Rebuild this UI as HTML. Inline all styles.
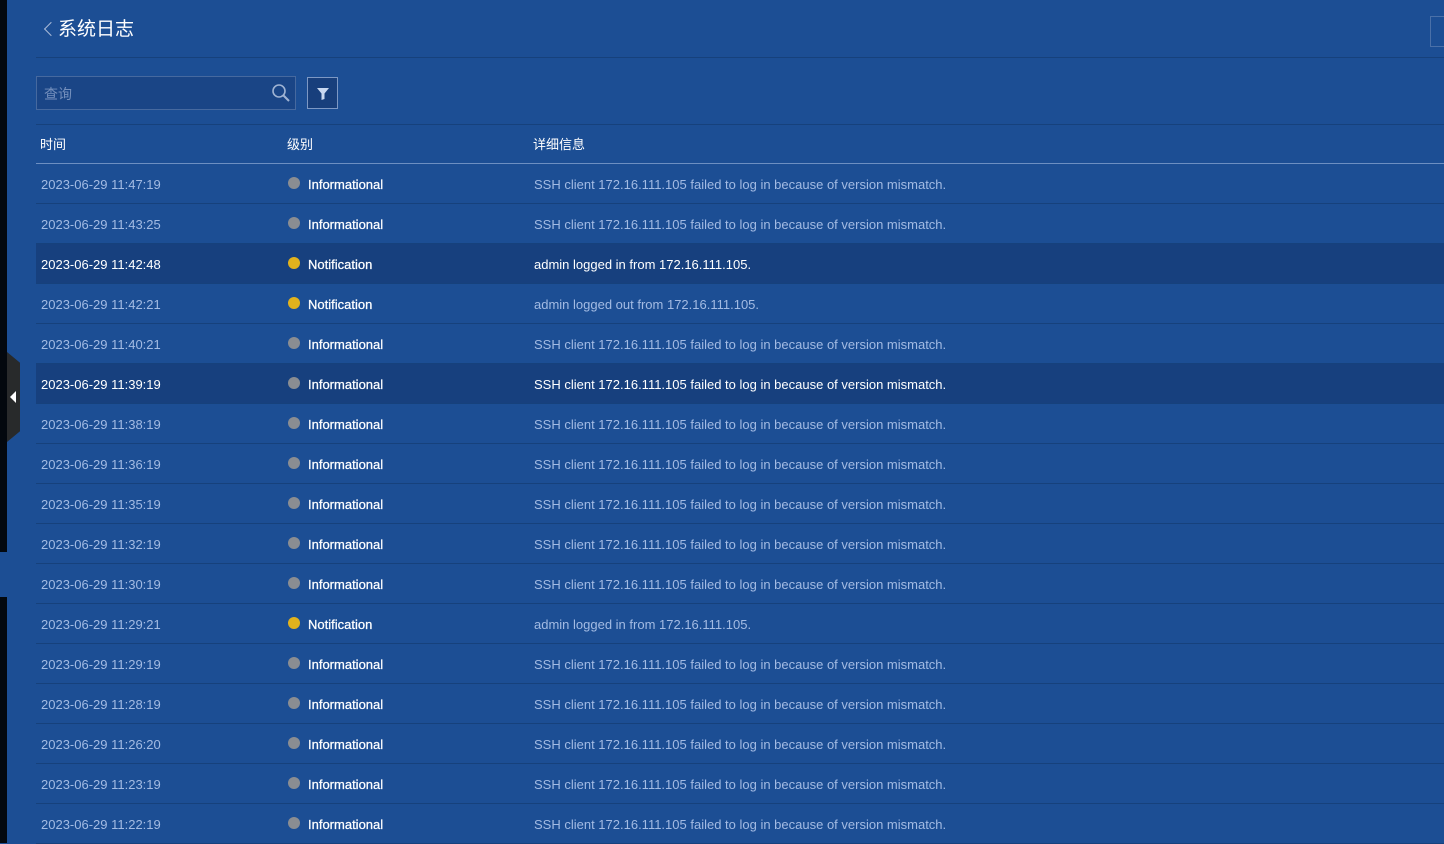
<!DOCTYPE html><html><head><meta charset="utf-8"><style>
body{margin:0;width:1444px;height:843px;overflow:hidden;background:#1c4e94;font-family:"Liberation Sans","Noto Sans CJK SC",sans-serif;position:relative}
.strip{position:absolute;left:0;top:0;width:7px;height:843px;background:#03080e}
.gap{position:absolute;left:0;top:552px;width:7px;height:45px;background:#1c4e94}
.tab{position:absolute;left:7px;top:352px;width:13px;height:90px;background:#282a2b;clip-path:polygon(0 0,100% 12%,100% 88%,0 100%)}
.tab:after{content:"";position:absolute;left:3px;top:39px;border-right:6px solid #fff;border-top:6px solid transparent;border-bottom:6px solid transparent}
.title{position:absolute;left:58px;top:14px;color:#fff;font-size:19px}
.back{position:absolute;left:46px;top:24px;width:9px;height:9px;border-left:1.5px solid #aabbd8;border-bottom:1.5px solid #aabbd8;transform:rotate(45deg)}
.hl1{position:absolute;left:36px;right:0;top:57px;height:1px;background:#16417c}
.rbtn{position:absolute;left:1430px;top:16px;width:20px;height:31px;border:1px solid #4a70a8;box-sizing:border-box}
.search{position:absolute;left:36px;top:76px;width:260px;height:34px;box-sizing:border-box;background:#1a4586;border:1px solid #46699f;color:#7590bd;font-size:14px;padding:7px 7px}
.filt{position:absolute;left:307px;top:77px;width:31px;height:32px;box-sizing:border-box;background:#183f7c;border:1px solid #7d98c4}
.hl2{position:absolute;left:36px;right:0;top:124px;height:1px;background:#16417c}
.th{position:absolute;top:134px;color:#fff;font-size:13px}
.hl3{position:absolute;left:36px;right:0;top:163px;height:1px;background:#6d8fc2}
.row{position:absolute;left:36px;right:0;height:40px;border-bottom:1px solid #16417c;box-sizing:border-box;font-size:13px}
.row.h{background:#17407e}
.row span{position:absolute;top:13px}
.t{left:5px;color:#a3bbe3}.l{left:272px;color:#fff;-webkit-text-stroke:0.25px #fff}.d{left:498px;color:#a3bbe3}
.row.h .t,.row.h .d{color:#fff}
.dot{position:absolute;left:252px;top:13px;width:12px;height:12px;border-radius:50%;background:#8a8d92}
.y{background:#e1b21d}
</style></head><body>
<div class="strip"></div><div class="gap"></div><div class="tab"></div>
<div class="back"></div><div class="title">系统日志</div>
<div class="rbtn"></div>
<div class="hl1"></div>
<div class="search">查询
<svg style="position:absolute;right:4px;top:6px" width="20" height="20" viewBox="0 0 20 20"><circle cx="8" cy="8" r="6" fill="none" stroke="#9fb3d3" stroke-width="1.6"/><path d="M12.5 12.5L18 18" stroke="#9fb3d3" stroke-width="2"/></svg></div>
<div class="filt"><svg style="position:absolute;left:9px;top:10px" width="12" height="12" viewBox="0 0 12 12"><path d="M0 0H12L7.5 5.5V11L4.5 12V5.5Z" fill="#c9d8f0"/></svg></div>
<div class="hl2"></div>
<div class="th" style="left:40px">时间</div><div class="th" style="left:287px">级别</div><div class="th" style="left:533px">详细信息</div>
<div class="hl3"></div>
<div id="rows"></div>
<script>
var d=[["11:47:19",0,0],["11:43:25",0,0],["11:42:48",1,1],["11:42:21",1,0],["11:40:21",0,0],["11:39:19",0,1],["11:38:19",0,0],["11:36:19",0,0],["11:35:19",0,0],["11:32:19",0,0],["11:30:19",0,0],["11:29:21",1,0],["11:29:19",0,0],["11:28:19",0,0],["11:26:20",0,0],["11:23:19",0,0],["11:22:19",0,0]];
var h="";d.forEach(function(r,i){var ip=r[1]?(i==3?"admin logged out from 172.16.111.105.":"admin logged in from 172.16.111.105."):"SSH client 172.16.111.105 failed to log in because of version mismatch.";
h+='<div class="row'+(r[2]?' h':'')+'" style="top:'+(164+i*40)+'px"><span class="t">2023-06-29 '+r[0]+'</span><div class="dot'+(r[1]?' y':'')+'"></div><span class="l">'+(r[1]?'Notification':'Informational')+'</span><span class="d">'+ip+'</span></div>';});
document.getElementById("rows").innerHTML=h;
</script>
</body></html>
